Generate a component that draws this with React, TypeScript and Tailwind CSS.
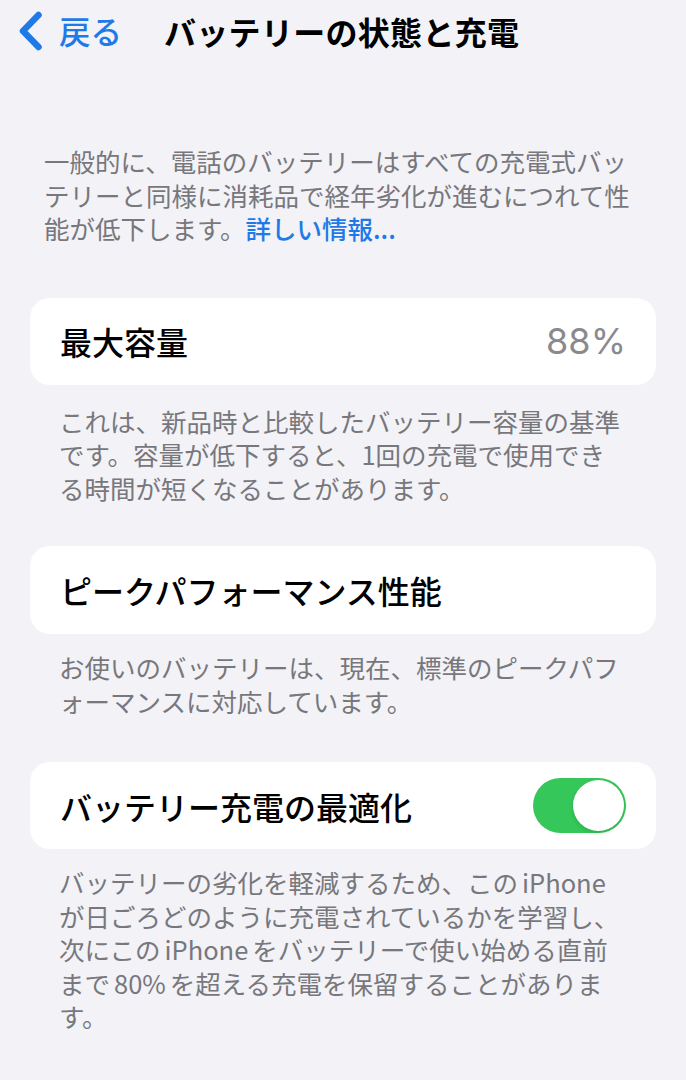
import React from 'react';

const FONT = { fontFamily: '"Noto Sans CJK JP", "Noto Sans", sans-serif' };

const BackChevron: React.FC = () => (
  <svg width="26" height="40" viewBox="0 0 26 40" fill="none" aria-hidden="true">
    <path d="M21.5 4 L6 20 L21.5 36" stroke="#1f7ae8" strokeWidth="6.5" strokeLinecap="round" strokeLinejoin="round" />
  </svg>
);

const Toggle: React.FC<{ on: boolean }> = ({ on }) => (
  <div className={`relative w-[93px] h-[55px] rounded-full ${on ? 'bg-[#35c759]' : 'bg-[#e9e9eb]'}`}>
    <div
      className={`absolute top-[2px] w-[51px] h-[51px] rounded-full bg-white shadow-[0_2px_4px_rgba(0,0,0,0.12)] ${on ? 'right-[2px]' : 'left-[2px]'}`}
    />
  </div>
);

const Card: React.FC<{ children: React.ReactNode; className?: string }> = ({ children, className }) => (
  <div className={`mx-[30px] h-[87px] bg-white rounded-[20px] px-[30px] flex items-center justify-between ${className ?? ''}`}>
    {children}
  </div>
);

const Footer: React.FC<{ children: React.ReactNode; className?: string }> = ({ children, className }) => (
  <p className={`pl-[59px] pr-[20px] text-[25.5px] leading-[33.5px] text-[#77777c] ${className ?? ''}`}>{children}</p>
);

const Latin: React.FC<{ children: React.ReactNode }> = ({ children }) => (
  <span className="mx-[4px]">{children}</span>
);

export default function App() {
  return (
    <div className="min-h-screen bg-[#f2f2f7] text-black" style={FONT}>
      {/* nav bar */}
      <header className="h-[62px] flex items-center pl-[17px]">
        <button className="flex items-center gap-[16px] text-[#1f7ae8]">
          <BackChevron />
          <span className="text-[31.5px] font-medium leading-none">戻る</span>
        </button>
        <h1 className="ml-[42px] text-[32px] font-bold leading-none tracking-[0.3px]">バッテリーの状態と充電</h1>
      </header>

      <p className="mt-[82px] pl-[44px] pr-[20px] text-[25.5px] leading-[33.5px] text-[#77777c]">
        一般的に、電話のバッテリーはすべての充電式バッ
        <br />
        テリーと同様に消耗品で経年劣化が進むにつれて性
        <br />
        能が低下します。<span className="text-[#1f7ae8] font-medium">詳しい情報...</span>
      </p>

      <Card className="mt-[53px]">
        <span className="text-[32px] font-medium">最大容量</span>
        <span className="text-[36px] text-[#8a8a8e]" style={{ fontFamily: 'Inter, "Noto Sans", sans-serif' }}>
          88%
        </span>
      </Card>
      <Footer className="pt-[19px]">
        これは、新品時と比較したバッテリー容量の基準
        <br />
        です。容量が低下すると、1回の充電で使用でき
        <br />
        る時間が短くなることがあります。
      </Footer>

      <Card className="mt-[42px] h-[88px]">
        <span className="text-[32px] font-medium">ピークパフォーマンス性能</span>
      </Card>
      <Footer className="pt-[16px]">
        お使いのバッテリーは、現在、標準のピークパフ
        <br />
        ォーマンスに対応しています。
      </Footer>

      <Card className="mt-[45px]">
        <span className="text-[32px] font-medium">バッテリー充電の最適化</span>
        <Toggle on />
      </Card>
      <Footer className="pt-[16px] pb-[40px]">
        バッテリーの劣化を軽減するため、この<Latin>iPhone</Latin>
        <br />
        が日ごろどのように充電されているかを学習し、
        <br />
        次にこの<Latin>iPhone</Latin>をバッテリーで使い始める直前
        <br />
        まで<Latin>80%</Latin>を超える充電を保留することがありま
        <br />
        す。
      </Footer>
    </div>
  );
}
